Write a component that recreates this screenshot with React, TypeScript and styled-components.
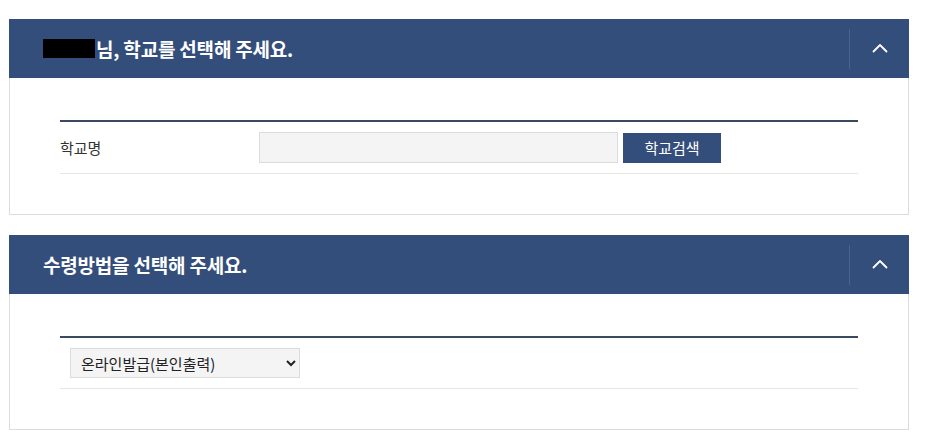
import styled, { createGlobalStyle } from "styled-components";

const GlobalStyle = createGlobalStyle`
    html, body {
        margin: 0;
        padding: 0;
        background: #fff;
    }
    body {
        font-family: "Noto Sans CJK KR", "Noto Sans", sans-serif;
        color: #333;
    }
`;

function ChevronUp() {
    return (
        <svg width="16" height="10" viewBox="0 0 16 10" fill="none">
            <path
                d="M1.5 8.5 L8 2 L14.5 8.5"
                stroke="#fff"
                strokeWidth="1.8"
                strokeLinecap="round"
                strokeLinejoin="round"
            />
        </svg>
    );
}

interface PanelProps {
    title: React.ReactNode;
    children: React.ReactNode;
}

function Panel({ title, children }: PanelProps) {
    return (
        <Section>
            <Header>
                <Title>{title}</Title>
                <Toggle type="button" aria-label="접기">
                    <ChevronUp />
                </Toggle>
            </Header>
            <Body>{children}</Body>
        </Section>
    );
}

export default function App() {
    return (
        <>
            <GlobalStyle />
            <Page>
                <Panel
                    title={
                        <>
                            <Masked />님, 학교를 선택해 주세요.
                        </>
                    }
                >
                    <Table>
                        <Row>
                            <Label>학교명</Label>
                            <Field>
                                <SchoolInput type="text" />
                                <SearchButton type="button">학교검색</SearchButton>
                            </Field>
                        </Row>
                    </Table>
                </Panel>
                <Panel title="수령방법을 선택해 주세요.">
                    <Table>
                        <Row>
                            <SelectWrap>
                                <MethodSelect defaultValue="online">
                                    <option value="online">온라인발급(본인출력)</option>
                                    <option value="mail">우편발송</option>
                                </MethodSelect>
                            </SelectWrap>
                        </Row>
                    </Table>
                </Panel>
            </Page>
        </>
    );
}

const Page = styled.div`
    padding: 19px 0 0 9px;
    display: flex;
    flex-direction: column;
    gap: 20px;
    width: 900px;
`;

const Section = styled.section`
    display: flex;
    flex-direction: column;
`;

const Header = styled.div`
    height: 59px;
    background-color: #344e7b;
    display: flex;
    align-items: center;
    justify-content: space-between;
`;

const Title = styled.h2`
    margin: 0;
    padding-left: 34px;
    font-size: 19px;
    font-weight: 700;
    color: #fff;
    letter-spacing: -0.2px;
    display: flex;
    align-items: center;
`;

const Masked = styled.span`
    display: inline-block;
    width: 52px;
    height: 19px;
    background: #000;
    margin-right: 1px;
`;

const Toggle = styled.button`
    width: 60px;
    height: 40px;
    border: 0;
    border-left: 1px solid #4b6391;
    background: transparent;
    display: flex;
    align-items: center;
    justify-content: center;
    padding: 0 0 2px 0;
    cursor: pointer;
`;

const Body = styled.div`
    border: 1px solid #dcdcdc;
    border-top: 0;
    padding: 42px 50px 40px;
`;

const Table = styled.div`
    border-top: 2px solid #3b4a61;
`;

const Row = styled.div`
    display: flex;
    align-items: center;
    padding: 10px 0;
    border-bottom: 1px solid #e6e6e6;
`;

const Label = styled.div`
    width: 199px;
    font-size: 15px;
    color: #333;
`;

const Field = styled.div`
    display: flex;
    align-items: center;
    gap: 5px;
`;

const SchoolInput = styled.input`
    box-sizing: border-box;
    width: 359px;
    height: 31px;
    border: 1px solid #dcdcdc;
    background: #f4f4f4;
    padding: 0 10px;
    font-family: inherit;
    font-size: 15px;
    outline: none;
`;

const SearchButton = styled.button`
    box-sizing: border-box;
    width: 98px;
    height: 30px;
    border: 0;
    background: #344e7b;
    color: #fff;
    font-family: inherit;
    font-size: 15px;
    cursor: pointer;
`;

const SelectWrap = styled.div`
    padding-left: 10px;
`;

const MethodSelect = styled.select`
    box-sizing: border-box;
    width: 230px;
    height: 30px;
    border: 1px solid #dcdcdc;
    background: #f4f4f4;
    padding: 0 6px;
    font-family: inherit;
    font-size: 15px;
    color: #222;
    outline: none;
`;
